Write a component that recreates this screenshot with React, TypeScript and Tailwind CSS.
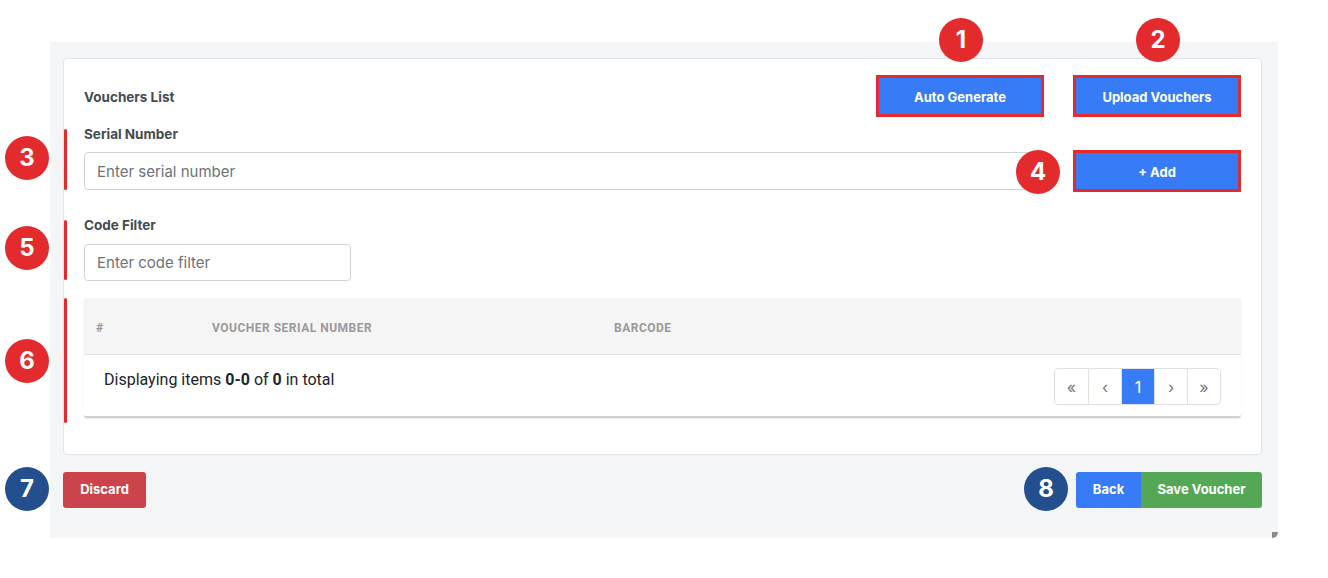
import { ReactNode } from "react";

function Marker({ n, navy, className }: { n: number; navy?: boolean; className: string }) {
  return (
    <div
      className={`absolute flex h-[44px] w-[44px] items-center justify-center rounded-full text-[24px] font-bold text-white ${
        navy ? "bg-[#234f8f]" : "bg-[#e32b2d]"
      } ${className}`}
    >
      {n}
    </div>
  );
}

function Outlined({ children }: { children: ReactNode }) {
  return (
    <button className="flex h-[42px] w-[168px] items-center justify-center border-[3px] border-[#e32b2d] bg-[#377cf6] pt-[3px] text-[13px] font-bold text-white">
      {children}
    </button>
  );
}

const pages = ["«", "‹", "1", "›", "»"];

export default function App() {
  return (
    <div className="relative h-[578px] w-[1328px] bg-white font-['Inter',sans-serif] text-[#212529]">
      <div className="absolute left-[50px] top-[42px] flex h-[496px] w-[1228px] flex-col bg-[#f4f5f7] pl-[13px] pr-[16px] pt-[16px]">
        <div className="rounded-[4px] border border-[#e3e5e8] bg-white px-[20px] pb-[36px] pt-[16px]">
          <div className="flex h-[42px] items-center justify-between">
            <span className="pt-[3px] text-[13.5px] font-bold text-[#454b52]">Vouchers List</span>
            <div className="flex gap-[29px]">
              <Outlined>Auto Generate</Outlined>
              <Outlined>Upload Vouchers</Outlined>
            </div>
          </div>

          <label className="mt-[9px] block text-[13.5px] font-bold leading-[16px] text-[#454b52]">Serial Number</label>
          <div className="mt-[8px] flex h-[42px] items-center justify-between">
            <input
              className="h-[38px] w-[960px] rounded-[4px] border border-[#cfd3d8] px-[12px] text-[15px] text-[#495057] outline-none placeholder:text-[#6c737a]"
              placeholder="Enter serial number"
            />
            <Outlined>+ Add</Outlined>
          </div>

          <label className="mt-[25px] block text-[13.5px] font-bold leading-[16px] text-[#454b52]">Code Filter</label>
          <input
            className="mt-[11px] block h-[37px] w-[267px] rounded-[4px] border border-[#cfd3d8] px-[12px] text-[15px] text-[#495057] outline-none placeholder:text-[#6c737a]"
            placeholder="Enter code filter"
          />

          <div className="mt-[17px] rounded-[3px] border-b-2 border-[#d0d0d0] bg-white shadow-[0_1px_2px_rgba(0,0,0,0.08)]">
            <div className="flex h-[57px] items-center border-b border-[#e4e4e4] bg-[#f5f5f6] pt-[3px] font-['Roboto',sans-serif] text-[12px] font-bold tracking-[0.5px] text-[#9a9a9a]">
              <span className="w-[128px] pl-[12px]">#</span>
              <span className="w-[402px]">VOUCHER SERIAL NUMBER</span>
              <span>BARCODE</span>
            </div>
            <div className="flex h-[61px] items-start justify-between pl-[20px] pr-[20px] pt-[13px]">
              <p className="font-['Roboto',sans-serif] text-[16px] leading-[24px]">
                Displaying items <b>0-0</b> of <b>0</b> in total
              </p>
              <div className="flex h-[37px] overflow-hidden rounded-[4px] border border-[#dee2e6]">
                {pages.map((p, i) => (
                  <span
                    key={p}
                    className={`flex w-[33px] items-center justify-center text-[16px] ${
                      i > 0 ? "border-l border-[#dee2e6]" : ""
                    } ${p === "1" ? "bg-[#377cf6] text-white" : "text-[#6c757d]"}`}
                  >
                    {p}
                  </span>
                ))}
              </div>
            </div>
          </div>
        </div>

        <div className="mt-[17px] flex items-center justify-between">
          <button className="h-[36px] w-[83px] rounded-[3px] bg-[#cc444b] text-[13px] font-bold text-white">Discard</button>
          <div className="flex h-[36px] overflow-hidden rounded-[3px] text-[13px] font-bold text-white">
            <button className="w-[65px] bg-[#377cf6]">Back</button>
            <button className="w-[121px] bg-[#54a855]">Save Voucher</button>
          </div>
        </div>
      </div>

      <div className="absolute left-[1272px] top-[532px] h-[6px] w-[6px] rounded-br-[6px] bg-[#8a8a8a]" />

      <div className="absolute left-[64px] top-[129px] h-[61px] w-[3px] rounded-full bg-[#e32b2d]" />
      <div className="absolute left-[64px] top-[220px] h-[60px] w-[3px] rounded-full bg-[#e32b2d]" />
      <div className="absolute left-[64px] top-[298px] h-[125px] w-[3px] rounded-full bg-[#e32b2d]" />

      <Marker n={1} className="left-[939px] top-[18px]" />
      <Marker n={2} className="left-[1136px] top-[18px]" />
      <Marker n={3} className="left-[5px] top-[136px]" />
      <Marker n={4} className="left-[1016px] top-[150px]" />
      <Marker n={5} className="left-[5px] top-[226px]" />
      <Marker n={6} className="left-[5px] top-[339px]" />
      <Marker n={7} navy className="left-[5px] top-[467px]" />
      <Marker n={8} navy className="left-[1024px] top-[467px]" />
    </div>
  );
}
